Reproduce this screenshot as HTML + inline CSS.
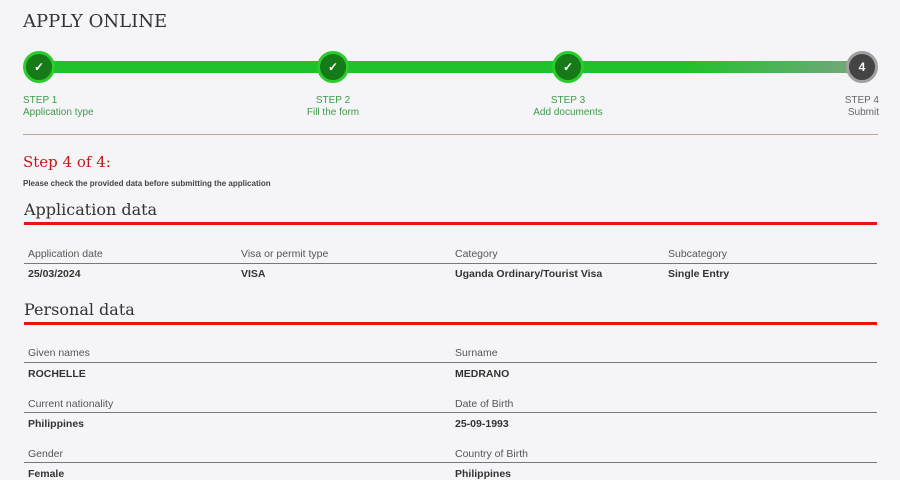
<!DOCTYPE html><html><head><style>
body{margin:0;width:900px;height:475px;overflow:hidden;background:#f5f5f8;font-family:"Liberation Sans",sans-serif;position:relative}
.a{position:absolute;white-space:nowrap}
.serif{font-family:"DejaVu Serif","Liberation Serif",serif}
.c{position:absolute;width:26px;height:26px;border-radius:50%;border:3px solid #2ccc2c;background:#157a17;color:#fff;font-size:12px;font-weight:bold;text-align:center;line-height:26px;top:51px}
.st{position:absolute;font-size:10px;color:#3f9a4a;line-height:12px}
.lab{position:absolute;font-size:10.5px;color:#555}
.val{position:absolute;font-size:10.5px;color:#333;font-weight:bold}
.hl{position:absolute;height:1px;background:#777}
.rl{position:absolute;left:24px;width:853px;height:3px;background:#e8140e}
</style></head><body>
<div class="a serif" style="left:23px;top:11px;font-size:18px;color:#333">APPLY ONLINE</div>
<div class="a" style="left:39px;top:61px;width:823px;height:12px;background:linear-gradient(90deg,#1fc22a 0%,#1fc22a 78%,#6ea877 98%)"></div>
<div class="c" style="left:23px">✓</div>
<div class="c" style="left:317px">✓</div>
<div class="c" style="left:552px">✓</div>
<div class="c" style="left:846px;border-color:#a0a0a0;background:#444">4</div>
<div class="st" style="left:23px;top:95px">STEP 1<br>Application type</div>
<div class="st" style="left:283px;width:100px;text-align:center;top:95px">STEP 2<br>Fill the form</div>
<div class="st" style="left:518px;width:100px;text-align:center;top:95px">STEP 3<br>Add documents</div>
<div class="st" style="left:779px;width:100px;text-align:right;top:95px;color:#666">STEP 4<br>Submit</div>
<div class="a" style="left:23px;top:134px;width:855px;height:1px;background:#b8a8a0"></div>
<div class="a serif" style="left:23px;top:153px;font-size:15px;color:#c8141b">Step 4 of 4:</div>
<div class="a" style="left:23px;top:179px;font-size:8px;font-weight:bold;color:#444">Please check the provided data before submitting the application</div>
<div class="a serif" style="left:24px;top:200px;font-size:16px;color:#333">Application data</div>
<div class="rl" style="top:222px"></div>
<div class="lab" style="left:28px;top:248px">Application date</div>
<div class="lab" style="left:241px;top:248px">Visa or permit type</div>
<div class="lab" style="left:455px;top:248px">Category</div>
<div class="lab" style="left:668px;top:248px">Subcategory</div>
<div class="hl" style="left:24px;top:263px;width:853px"></div>
<div class="val" style="left:28px;top:268px">25/03/2024</div>
<div class="val" style="left:241px;top:268px">VISA</div>
<div class="val" style="left:455px;top:268px">Uganda Ordinary/Tourist Visa</div>
<div class="val" style="left:668px;top:268px">Single Entry</div>
<div class="a serif" style="left:24px;top:300px;font-size:16px;color:#333">Personal data</div>
<div class="rl" style="top:322px"></div>
<div class="lab" style="left:28px;top:347px">Given names</div>
<div class="lab" style="left:455px;top:347px">Surname</div>
<div class="hl" style="left:24px;top:362px;width:853px"></div>
<div class="val" style="left:28px;top:368px">ROCHELLE</div>
<div class="val" style="left:455px;top:368px">MEDRANO</div>
<div class="lab" style="left:28px;top:398px">Current nationality</div>
<div class="lab" style="left:455px;top:398px">Date of Birth</div>
<div class="hl" style="left:24px;top:412px;width:853px"></div>
<div class="val" style="left:28px;top:418px">Philippines</div>
<div class="val" style="left:455px;top:418px">25-09-1993</div>
<div class="lab" style="left:28px;top:448px">Gender</div>
<div class="lab" style="left:455px;top:448px">Country of Birth</div>
<div class="hl" style="left:24px;top:462px;width:853px"></div>
<div class="val" style="left:28px;top:468px">Female</div>
<div class="val" style="left:455px;top:468px">Philippines</div>
</body></html>
